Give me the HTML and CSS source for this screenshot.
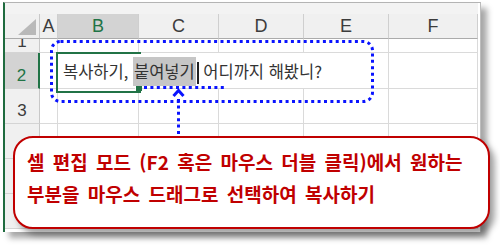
FILE: index.html
```html
<!DOCTYPE html>
<html lang="ko">
<head>
  <meta charset="UTF-8" />
  <title>셀 편집 모드 복사하기</title>
  <link rel="stylesheet" href="styles.css">
</head>
<body>

  <div class="shot">
    <!-- Excel sheet -->
    <div class="sheet">
      <div class="strip"></div>

      <div class="corner"><span class="tri"></span></div>
      <div class="colhead">A</div>
      <div class="colhead sel">B</div>
      <div class="colhead">C</div>
      <div class="colhead">D</div>
      <div class="colhead">E</div>
      <div class="colhead">F</div>

      <div class="rowhead first">1</div>
      <div class="cell"></div><div class="cell"></div><div class="cell"></div>
      <div class="cell"></div><div class="cell"></div><div class="cell"></div>

      <div class="rowhead sel">2</div>
      <div class="cell"></div>
      <div class="cell edit">
        <span>복사하기, <mark>붙여넣기</mark><i class="caret"></i> 어디까지 해봤니?</span>
      </div>
      <div class="cell"></div>

      <div class="rowhead">3</div>
      <div class="cell"></div><div class="cell"></div><div class="cell"></div>
      <div class="cell"></div><div class="cell"></div><div class="cell"></div>

      <div class="rowhead">4</div>
      <div class="cell"></div><div class="cell"></div><div class="cell"></div>
      <div class="cell"></div><div class="cell"></div><div class="cell"></div>

      <div class="rowhead">5</div>
      <div class="cell"></div><div class="cell"></div><div class="cell"></div>
      <div class="cell"></div><div class="cell"></div><div class="cell"></div>

      <div class="rowhead">6</div>
      <div class="cell"></div><div class="cell"></div><div class="cell"></div>
      <div class="cell"></div><div class="cell"></div><div class="cell"></div>
    </div>

    <!-- Blue dotted marks -->
    <svg class="marks" width="500" height="248" viewBox="0 0 500 248">
      <g fill="none" stroke="#0a14ff" stroke-width="3">
        <rect x="51.5" y="41.5" width="321" height="60" rx="9" stroke-dasharray="3 3.4" />
        <line x1="144" y1="87.5" x2="224" y2="87.5" stroke-dasharray="3 3.4" />
        <line x1="178.5" y1="99" x2="178.5" y2="137" stroke-dasharray="3 3.4" />
        <polyline points="173.5,96 178.5,90.5 183.5,96" />
      </g>
    </svg>

    <!-- Callout -->
    <div class="callout">
      <p>셀 편집 모드 (F2 혹은 마우스 더블 클릭)에서 원하는</p>
      <p>부분을 마우스 드래그로 선택하여 복사하기</p>
    </div>
  </div>

</body>
</html>
```

FILE: styles.css
```css
* {
  margin: 0;
  padding: 0;
  box-sizing: border-box;
}

body {
  background: #fff;
  font-family: "Liberation Sans", Arial, sans-serif;
}

.shot {
  position: relative;
  width: 500px;
  height: 248px;
  overflow: hidden;
}

/* Excel sheet */
.sheet {
  margin: 2px 0 0 3px;
  width: 478px;
  height: 230px;
  border-top: 1px solid #b4b4b4;
  border-left: 2px solid #1f6b3f;
  border-right: 1px solid #bdbdbd;
  background: #fff;
  display: grid;
  grid-template-columns: 35px 18px 81px 80px 85px 85px 89px;
  grid-template-rows: 11px 25px 14px 36px 35px 35px 35px 35px;
  overflow: hidden;
  box-shadow: 6px 6px 6px rgba(0, 0, 0, 0.35);
}

.strip {
  grid-column: 1 / -1;
  background: #f3f3f3;
}

.corner {
  background: #f0f0f0;
  border-right: 1px solid #c8c8c8;
  border-bottom: 1px solid #ababab;
  position: relative;
}

.corner .tri {
  position: absolute;
  left: 13px;
  top: 5px;
  width: 18px;
  height: 16px;
  background: #b9b9b9;
  clip-path: polygon(100% 0, 100% 100%, 0 100%);
}

.colhead {
  background: #f0f0f0;
  border-right: 1px solid #cfcfcf;
  border-bottom: 1px solid #ababab;
  color: #3c3c3c;
  font-size: 18px;
  display: flex;
  align-items: center;
  justify-content: center;
  padding-top: 1px;
  overflow: hidden;
}

.colhead.sel {
  background: #d3d3d3;
  color: #217346;
}

.rowhead {
  background: #f0f0f0;
  border-right: 1px solid #c8c8c8;
  border-bottom: 1px solid #d4d4d4;
  color: #3c3c3c;
  font-size: 17px;
  line-height: 16px;
  display: flex;
  align-items: flex-end;
  justify-content: center;
  padding-bottom: 4px;
  overflow: hidden;
}

.rowhead.first {
  padding-bottom: 2px;
}

.rowhead.sel {
  background: #d3d3d3;
  color: #217346;
  border-right: 2px solid #217346;
}

.cell {
  border-right: 1px solid #dadada;
  border-bottom: 1px solid #dadada;
}

/* B2 in edit mode, text runs over C..E */
.cell.edit {
  grid-column: span 4;
  position: relative;
  display: flex;
  align-items: center;
  padding: 2px 0 0 5px;
  font-family: "Noto Sans CJK KR", sans-serif;
  font-size: 16.5px;
  color: #333;
  white-space: nowrap;
}

.cell.edit::before {
  content: '';
  position: absolute;
  left: -2px;
  top: -1px;
  width: 83px;
  height: 37px;
  border: 2px solid #217346;
  border-right: none;
}

.cell.edit::after {
  content: '';
  position: absolute;
  left: 77px;
  top: 33px;
  width: 6px;
  height: 5px;
  background: #217346;
  border-left: 1px solid #fff;
}

.cell.edit mark {
  background: #c6c6c6;
  color: #333;
  padding: 2px 1px 3px;
}

.caret {
  display: inline-block;
  width: 2px;
  height: 22px;
  background: #222;
  vertical-align: middle;
  margin-left: 1px;
}

.marks {
  position: absolute;
  left: 0;
  top: 0;
}

/* Red callout */
.callout {
  position: absolute;
  left: 13px;
  top: 136px;
  width: 477px;
  height: 93px;
  border: 2px solid #c00000;
  border-radius: 20px;
  background: #fff;
  box-shadow: 5px 6px 6px rgba(0, 0, 0, 0.35);
  padding: 8px 0 0 12px;
}

.callout p {
  font-family: "Noto Sans CJK KR", sans-serif;
  font-weight: bold;
  font-size: 19px;
  line-height: 32px;
  color: #c00000;
  white-space: nowrap;
  word-spacing: 3px;
}
```
